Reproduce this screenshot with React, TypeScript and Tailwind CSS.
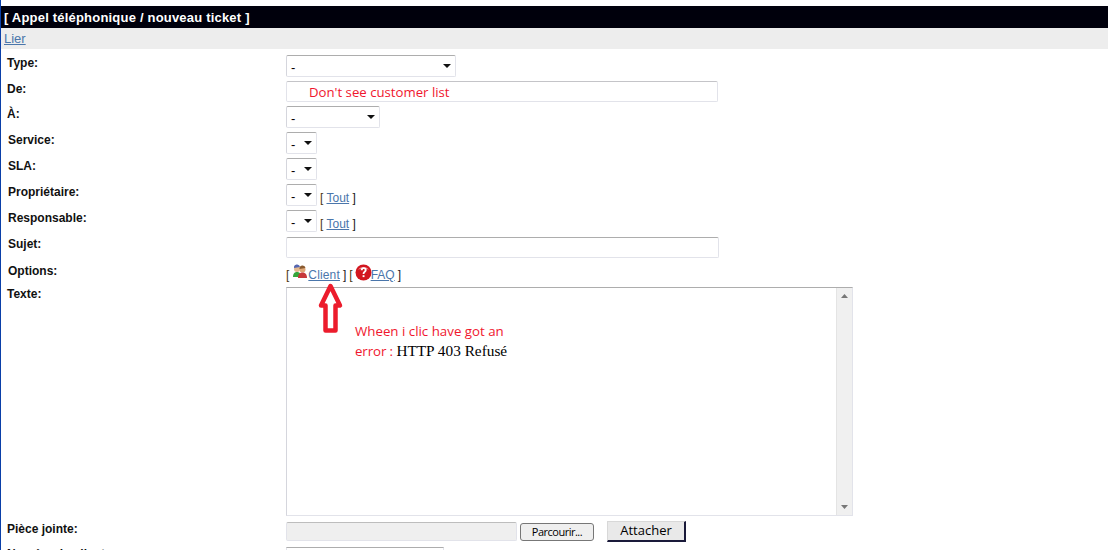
const sans = "font-['Liberation_Sans',Arial,sans-serif]";

function Caret() {
  return (
    <svg width="8" height="4" viewBox="0 0 8 4" className="shrink-0">
      <path d="M0 0h8L4 4z" fill="#111" />
    </svg>
  );
}

function Select({ width }: { width: string }) {
  return (
    <div className={`${width} h-[22px] flex items-center justify-between pl-[4px] pr-[4px] bg-white rounded-[2px] border border-[#e2e3ea] border-t-[#adadad] border-l-[#d5d6dd] text-[13px] text-black`}>
      <span className="leading-none pt-[3px]">-</span>
      <Caret />
    </div>
  );
}

function Row({ label, height, labelClass = "", children }: { label: string; height: string; labelClass?: string; children: React.ReactNode }) {
  return (
    <div className={`flex items-start ${height}`}>
      <div className={`w-[279px] text-xs font-bold leading-[14px] text-[#111] ${labelClass}`}>{label}</div>
      {children}
    </div>
  );
}

function Tout() {
  return (
    <span className="ml-[3px] pt-[7px] text-xs leading-[14px] text-[#222]">
      <span className="text-[#4a3410]">[</span> <a className="text-[#4a76ab] underline">Tout</a> <span>]</span>
    </span>
  );
}

export default function App() {
  return (
    <div className={`relative w-[1108px] h-[550px] overflow-hidden bg-white border-l border-[#0a3fa8] ${sans}`}>
      <div className="h-[6px]" />
      <div className="h-[22px] bg-[#00000c] pl-[3px] text-[13px] font-bold leading-[23px] tracking-[0.2px] text-white">
        [ Appel téléphonique / nouveau ticket ]
      </div>
      <div className="h-[21px] bg-[#ededed] pl-[3px] text-[13px] leading-[22px]">
        <a className="text-[#4a76ab] underline">Lier</a>
      </div>

      <div className="pl-[6px] pt-[6px]">
        <Row label="Type:" height="h-[26px]" labelClass="pt-px"><Select width="w-[170px]" /></Row>
        <Row label="De:" height="h-[25px]" labelClass="pt-px">
          <div className="w-[432px] h-[21px] bg-white rounded-[2px] border border-[#e2e3ea] border-t-[#c4c4c8]" />
        </Row>
        <Row label="À:" height="h-[26px]" labelClass="pt-px"><Select width="w-[94px]" /></Row>
        <Row label="Service:" height="h-[26px]" labelClass="pl-px pt-px"><Select width="w-[31px]" /></Row>
        <Row label="SLA:" height="h-[26px]" labelClass="pl-px pt-px"><Select width="w-[31px]" /></Row>
        <Row label="Propriétaire:" height="h-[26px]" labelClass="pl-px pt-px"><Select width="w-[31px]" /><Tout /></Row>
        <Row label="Responsable:" height="h-[27px]" labelClass="pl-px pt-px"><Select width="w-[31px]" /><Tout /></Row>
        <Row label="Sujet:" height="h-[27px]" labelClass="pl-px">
          <div className="w-[433px] h-[21px] bg-white rounded-[2px] border border-[#e2e3ea] border-t-[#adadad]" />
        </Row>
        <Row label="Options:" height="h-[23px]" labelClass="pl-px">
          <div className="flex items-end h-[18px] text-xs leading-[14px] text-[#222]">
            <span className="text-[#4a3410]">[</span>
            <svg width="16" height="16" viewBox="0 0 16 16" className="ml-[3px] mb-[2px]">
              <circle cx="5" cy="5" r="3" fill="#e4b98f" />
              <path d="M2 4a3 3 0 0 1 6-1z" fill="#5566b0" />
              <path d="M1 13c0-4 2-5 4-5s4 1 4 5z" fill="#35a63c" />
              <circle cx="10.5" cy="5.5" r="3" fill="#e0a878" />
              <path d="M7.5 5a3 3 0 0 1 6-1z" fill="#8a5a30" />
              <path d="M6 14c0-4 2-5.500 4.500-5.500S15 10 15 14z" fill="#c8383a" />
            </svg>
            <a className="text-[#4a76ab] underline tracking-[0.15px]">Client</a>
            <span className="ml-[3px]">]</span>
            <span className="ml-[3px] text-[#4a3410]">[</span>
            <svg width="17" height="17" viewBox="0 0 17 17" className="ml-[2px] mb-[1px] -mr-[1px]">
              <circle cx="8.500" cy="8.500" r="8" fill="#d2161f" />
              <path d="M3 6a6 5 0 0 1 11 0c-3-2-8-2-11 0z" fill="#f0888c" />
              <path d="M5.700 6.300c0-2 1.300-3 3-3s3 1 3 2.700c0 2.300-2.300 2.300-2.300 4H7.700c0-2.700 2-2.600 2-4 0-.6-.4-1-1-1s-1 .5-1 1.300z" fill="#fff" />
              <rect x="7.600" y="11.200" width="1.900" height="1.900" fill="#fff" />
            </svg>
            <a className="text-[#4a76ab] underline">FAQ</a>
            <span className="ml-[3px]">]</span>
          </div>
        </Row>
        <Row label="Texte:" height="h-[235px]">
          <div className="w-[567px] h-[229px] flex justify-end bg-white border border-[#e2e3ea] border-t-[#adadad] border-l-[#d5d6dd]">
            <div className="w-[16px] h-full flex flex-col items-center justify-between py-[6px] bg-[#f0f0f0] border-l border-[#e4e4e4]">
              <svg width="7" height="4" viewBox="0 0 7 4"><path d="M3.500 0L7 4H0z" fill="#777" /></svg>
              <svg width="7" height="4" viewBox="0 0 7 4"><path d="M3.500 4L7 0H0z" fill="#777" /></svg>
            </div>
          </div>
        </Row>
        <Row label="Pièce jointe:" height="h-[25px]">
          <div className="flex items-start">
            <div className="w-[231px] h-[19px] bg-[#efefef] rounded-[2px] border border-[#e2e3ea] border-t-[#bdbdbd]" />
            <div className="ml-[3px] mt-px w-[74px] h-[18px] flex items-center justify-center rounded-[3px] bg-[#efefef] border border-[#777] text-[11px] font-['Open_Sans',sans-serif] tracking-[-0.5px] text-black">
              Parcourir...
            </div>
            <div className="ml-[13px] -mt-px w-[79px] h-[21px] flex items-center justify-center bg-[#e9e9e9] border border-[#d8d8d8] border-r-2 border-b-2 border-r-[#1a1a3a] border-b-[#1a1a3a] text-[13px] font-['Open_Sans',sans-serif] text-black">
              Attacher
            </div>
          </div>
        </Row>
        <Row label="Numéro du client:" height="h-[22px]">
          <div className="w-[158px] h-[21px] bg-white border border-[#e2e3ea] border-t-[#adadad]" />
        </Row>
      </div>

      {/* annotations */}
      <div className="absolute left-[308px] top-[83px] font-['Open_Sans',sans-serif] text-[13.2px] leading-[18px] text-[#f0162e]">
        Don't see customer list
      </div>
      <svg width="26" height="52" viewBox="0 0 26 52" className="absolute left-[317px] top-[282px]">
        <path d="M12.500 4L22 23.500H17.500V48.500H7.500V23.500H3z" fill="#fff" stroke="#ec1c2c" strokeWidth="4.500" strokeLinejoin="round" />
      </svg>
      <div className="absolute left-[354px] top-[322px] font-['Open_Sans',sans-serif] text-[13.3px] leading-[19px] text-[#f0162e]">
        <div>Wheen i clic have got an</div>
        <div className="tracking-[-0.1px]">
          error : <span className="font-['Liberation_Serif',serif] text-[15.3px] tracking-normal text-black">HTTP 403 Refusé</span>
        </div>
      </div>
    </div>
  );
}
